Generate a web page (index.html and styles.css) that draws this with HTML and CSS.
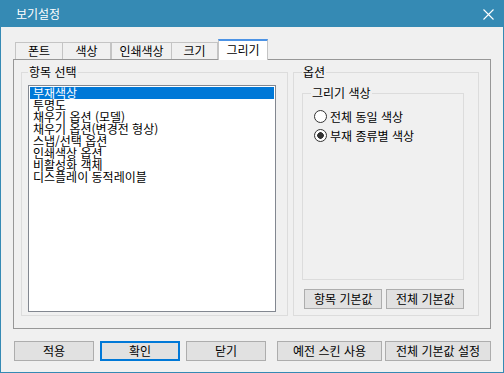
FILE: index.html
```html
<!DOCTYPE html>
<html lang="ko">
<head>
  <meta charset="UTF-8">
  <meta name="viewport" content="width=device-width, initial-scale=1.0">
  <link rel="stylesheet" href="styles.css">
  <title>보기설정</title>
</head>
<body>
  <div class="window">
    <div class="titlebar">
      <span class="title">보기설정</span>
      <svg class="close" width="11" height="11" viewBox="0 0 11 11">
        <path d="M0.5 0.5 L10.5 10.5 M10.5 0.5 L0.5 10.5" stroke="#fff" stroke-width="1.1" fill="none"/>
      </svg>
    </div>

    <div class="client">
      <div class="tabs">
        <div class="tab tab-font">폰트</div>
        <div class="tab tab-color">색상</div>
        <div class="tab tab-print">인쇄색상</div>
        <div class="tab tab-size">크기</div>
        <div class="tab tab-draw active">그리기</div>
      </div>

      <div class="panel">
        <fieldset class="group group-items">
          <legend>항목 선택</legend>
          <ul class="listbox">
            <li class="selected">부재색상</li>
            <li>투명도</li>
            <li>채우기 옵션 (모델)</li>
            <li>채우기 옵션(변경전 형상)</li>
            <li>스냅/선택 옵션</li>
            <li>인쇄색상 옵션</li>
            <li>비활성화 객체</li>
            <li>디스플레이 동적레이블</li>
          </ul>
        </fieldset>

        <fieldset class="group group-options">
          <legend>옵션</legend>
          <fieldset class="group group-color">
            <legend>그리기 색상</legend>
            <label class="radio"><input type="radio" name="drawColor">전체 동일 색상</label>
            <label class="radio"><input type="radio" name="drawColor" checked>부재 종류별 색상</label>
          </fieldset>
          <div class="group-buttons">
            <button class="btn btn-item-default">항목 기본값</button>
            <button class="btn btn-all-default">전체 기본값</button>
          </div>
        </fieldset>
      </div>

      <div class="footer">
        <button class="btn btn-apply">적용</button>
        <button class="btn btn-ok default">확인</button>
        <button class="btn btn-close">닫기</button>
        <button class="btn btn-skin">예전 스킨 사용</button>
        <button class="btn btn-reset">전체 기본값 설정</button>
      </div>
    </div>
  </div>
</body>
</html>
```

FILE: styles.css
```css
* {
  box-sizing: border-box;
}

body {
  margin: 0;
  font-family: "Noto Sans CJK KR", "Noto Sans", sans-serif;
  font-size: 12px;
  color: #000;
  background-color: #f0f0f0;
}

.window {
  width: 504px;
  height: 373px;
  border: 1px solid #358ab4;
  border-top: none;
  background-color: #f0f0f0;
}

.titlebar {
  height: 27px;
  margin: 0 -1px;
  padding: 0 10px 0 16px;
  display: flex;
  align-items: center;
  justify-content: space-between;
  background-color: #358ab4;
  color: #fff;
  line-height: 14px;
}

.close {
  display: block;
  margin-top: 2px;
}

.client {
  padding: 12px 0 0 12px;
}

/* tabs */
.tabs {
  display: flex;
  align-items: flex-end;
  height: 20px;
  margin-left: 2px;
}

.tab {
  height: 17px;
  border: 1px solid #c4c4c4;
  border-bottom: none;
  background-color: #f0f0f0;
  text-align: center;
  line-height: 15px;
}

.tab-font { width: 48px; }
.tab-color { width: 48px; border-left: none; }
.tab-print { width: 61px; }
.tab-size { width: 46px; border-left: none; }

.tab.active {
  position: relative;
  z-index: 1;
  width: 50px;
  height: 21px;
  margin-bottom: -1px;
  border-color: #c4c4c4;
  border-top: 2px solid #4c93e5;
  background-color: #fff;
  line-height: 18px;
}

.panel {
  display: flex;
  align-items: flex-start;
  width: 478px;
  height: 270px;
  padding: 6px 0 0 7px;
  border: 1px solid #979797;
  background-color: #f0f0f0;
}

/* group boxes */
.group {
  margin: 0;
  border: 1px solid #dcdcdc;
  min-width: 0;
}

.group legend {
  padding: 0 1px;
  line-height: 12px;
  height: 12px;
}

.group-items {
  width: 267px;
  padding: 7px 11px 3px 6px;
}

.listbox {
  list-style: none;
  margin: 0;
  padding: 1px;
  width: 248px;
  height: 227px;
  border: 1px solid #828790;
  background-color: #fff;
}

.listbox li {
  height: 12px;
  line-height: 12px;
  padding-left: 3px;
  white-space: nowrap;
}

.listbox li.selected {
  background-color: #0078d7;
  color: #fff;
}

.group-options {
  width: 186px;
  margin-left: 5px;
  padding: 9px 14px 6px 8px;
}

.group-color {
  width: 162px;
  padding: 8px 4px 134px 8px;
}

.radio {
  display: flex;
  align-items: center;
  height: 19px;
  line-height: 19px;
}

.radio input {
  appearance: none;
  -webkit-appearance: none;
  width: 13px;
  height: 13px;
  margin: 0 3px 0 3px;
  border: 1px solid #333;
  border-radius: 50%;
  background-color: #fff;
}

.radio input:checked {
  background: radial-gradient(circle, #333 0 3px, #fff 3.6px);
}

.group-buttons {
  display: flex;
  gap: 4px;
  margin: 9px 0 0 2px;
}

/* buttons */
.btn {
  height: 20px;
  padding: 0;
  border: 1px solid #adadad;
  background-color: #e1e1e1;
  font-family: inherit;
  font-size: 12px;
  line-height: 16px;
  color: #000;
}

.btn-item-default { width: 80px; }
.btn-all-default { width: 79px; }

.footer {
  display: flex;
  margin: 12px 0 0 1px;
}

.btn-apply { width: 80px; }
.btn-ok { width: 80px; margin-left: 6px; }
.btn-close { width: 80px; margin-left: 6px; }
.btn-skin { width: 105px; margin-left: 11px; }
.btn-reset { width: 106px; margin-left: 3px; }

.btn.default {
  border: 2px solid #0078d7;
}
```
